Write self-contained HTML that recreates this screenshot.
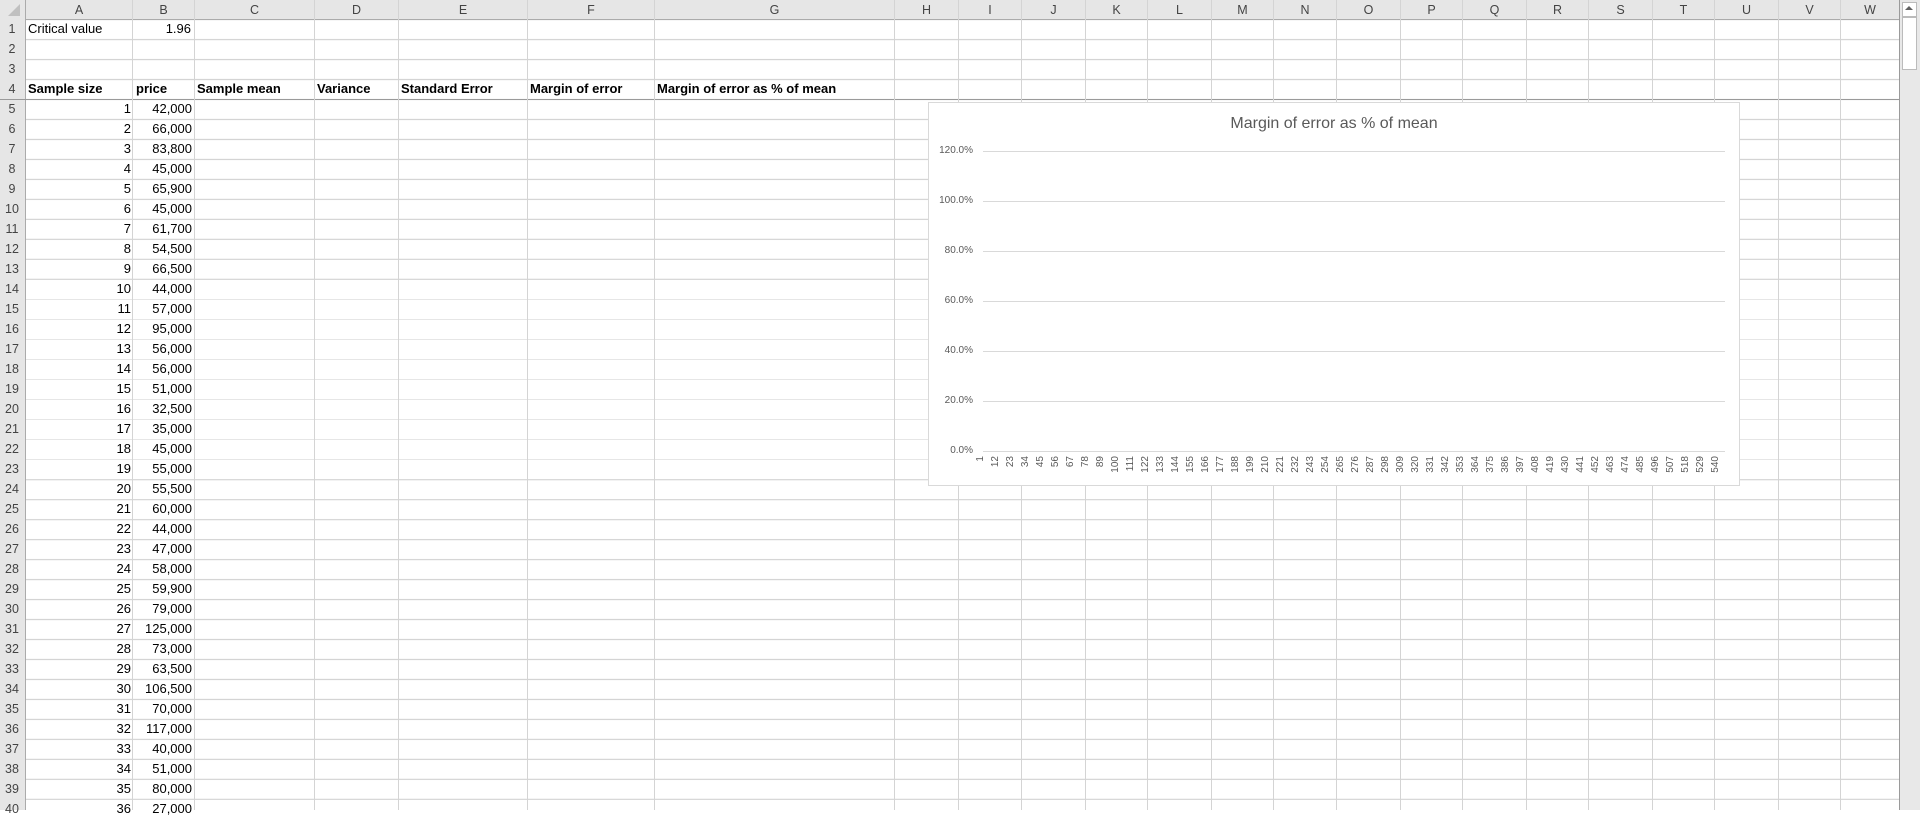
<!DOCTYPE html>
<html><head><meta charset="utf-8"><style>
body{margin:0;width:1920px;height:810px;overflow:hidden;background:#fff;font-family:"Liberation Sans",sans-serif;font-size:13px;color:#000;position:relative}
.a{position:absolute}
.vl{position:absolute;top:0;width:1px;height:810px;background:#d4d4d4}
.hd{position:absolute;top:0;height:20px;line-height:20px;text-align:center;color:#444;font-size:12.5px}
.rn{position:absolute;left:0;width:24px;text-align:center;color:#444;font-size:12.5px;height:20px;line-height:20px}
.t{position:absolute;height:20px;line-height:20px;white-space:nowrap}
.r{text-align:right}
.b{font-weight:bold}
.yl{position:absolute;right:0;font-size:10px;color:#595959;font-family:"Liberation Sans Narrow","Liberation Sans",sans-serif}
.xl{position:absolute;top:456px;font-size:10px;color:#595959;writing-mode:vertical-rl;transform:rotate(180deg);width:12px;text-align:left;line-height:12px}
</style></head><body>
<div class="a" style="left:0;top:0;width:1900px;height:810px;background:repeating-linear-gradient(to bottom,#d4d4d4 0,#d4d4d4 1px,transparent 1px,transparent 20px);background-position:0 19px"></div>
<div class="a" style="left:0;top:0;width:1900px;height:19px;background:#e6e6e6;border-bottom:1px solid #ababab"></div>
<div class="a" style="left:0;top:0;width:25px;height:810px;background:#e6e6e6;border-right:1px solid #ababab"></div>
<div class="a" style="left:0;top:99px;width:1899px;height:1px;background:#9a9a9a"></div>
<div class="vl" style="left:132px"></div><div class="vl" style="left:194px"></div><div class="vl" style="left:314px"></div><div class="vl" style="left:398px"></div><div class="vl" style="left:527px"></div><div class="vl" style="left:654px"></div><div class="vl" style="left:894px"></div><div class="vl" style="left:958px"></div><div class="vl" style="left:1021px"></div><div class="vl" style="left:1085px"></div><div class="vl" style="left:1147px"></div><div class="vl" style="left:1211px"></div><div class="vl" style="left:1273px"></div><div class="vl" style="left:1336px"></div><div class="vl" style="left:1400px"></div><div class="vl" style="left:1462px"></div><div class="vl" style="left:1526px"></div><div class="vl" style="left:1588px"></div><div class="vl" style="left:1652px"></div><div class="vl" style="left:1714px"></div><div class="vl" style="left:1778px"></div><div class="vl" style="left:1840px"></div>
<div class="a" style="left:1899px;top:0;width:1px;height:810px;background:#9a9a9a"></div>
<div class="a" style="left:1900px;top:0;width:20px;height:810px;background:#e8e8e8"></div>
<div class="a" style="left:1902px;top:2px;width:13px;height:13px;background:#fff;border:1px solid #bbb"></div>
<div class="a" style="left:1905px;top:6px;width:0;height:0;border-left:4px solid transparent;border-right:4px solid transparent;border-bottom:4px solid #606060"></div>
<div class="a" style="left:1902px;top:17px;width:13px;height:51px;background:#fff;border:1px solid #bbb"></div>
<div class="a" style="left:8px;top:4px;width:0;height:0;border-left:12px solid transparent;border-bottom:12px solid #c0c0c0"></div>
<div class="hd" style="left:26px;width:106px">A</div><div class="hd" style="left:133px;width:61px">B</div><div class="hd" style="left:195px;width:119px">C</div><div class="hd" style="left:315px;width:83px">D</div><div class="hd" style="left:399px;width:128px">E</div><div class="hd" style="left:528px;width:126px">F</div><div class="hd" style="left:655px;width:239px">G</div><div class="hd" style="left:895px;width:63px">H</div><div class="hd" style="left:959px;width:62px">I</div><div class="hd" style="left:1022px;width:63px">J</div><div class="hd" style="left:1086px;width:61px">K</div><div class="hd" style="left:1148px;width:63px">L</div><div class="hd" style="left:1212px;width:61px">M</div><div class="hd" style="left:1274px;width:62px">N</div><div class="hd" style="left:1337px;width:63px">O</div><div class="hd" style="left:1401px;width:61px">P</div><div class="hd" style="left:1463px;width:63px">Q</div><div class="hd" style="left:1527px;width:61px">R</div><div class="hd" style="left:1589px;width:63px">S</div><div class="hd" style="left:1653px;width:61px">T</div><div class="hd" style="left:1715px;width:63px">U</div><div class="hd" style="left:1779px;width:61px">V</div><div class="hd" style="left:1841px;width:58px">W</div>
<div class="rn" style="top:19px">1</div><div class="rn" style="top:39px">2</div><div class="rn" style="top:59px">3</div><div class="rn" style="top:79px">4</div><div class="rn" style="top:99px">5</div><div class="rn" style="top:119px">6</div><div class="rn" style="top:139px">7</div><div class="rn" style="top:159px">8</div><div class="rn" style="top:179px">9</div><div class="rn" style="top:199px">10</div><div class="rn" style="top:219px">11</div><div class="rn" style="top:239px">12</div><div class="rn" style="top:259px">13</div><div class="rn" style="top:279px">14</div><div class="rn" style="top:299px">15</div><div class="rn" style="top:319px">16</div><div class="rn" style="top:339px">17</div><div class="rn" style="top:359px">18</div><div class="rn" style="top:379px">19</div><div class="rn" style="top:399px">20</div><div class="rn" style="top:419px">21</div><div class="rn" style="top:439px">22</div><div class="rn" style="top:459px">23</div><div class="rn" style="top:479px">24</div><div class="rn" style="top:499px">25</div><div class="rn" style="top:519px">26</div><div class="rn" style="top:539px">27</div><div class="rn" style="top:559px">28</div><div class="rn" style="top:579px">29</div><div class="rn" style="top:599px">30</div><div class="rn" style="top:619px">31</div><div class="rn" style="top:639px">32</div><div class="rn" style="top:659px">33</div><div class="rn" style="top:679px">34</div><div class="rn" style="top:699px">35</div><div class="rn" style="top:719px">36</div><div class="rn" style="top:739px">37</div><div class="rn" style="top:759px">38</div><div class="rn" style="top:779px">39</div><div class="rn" style="top:799px">40</div>
<div class="t" style="left:28px;top:19px">Critical value</div><div class="t r" style="left:135px;width:56px;top:19px">1.96</div>
<div class="t b" style="left:28px;top:79px">Sample size</div><div class="t b" style="left:136px;top:79px">price</div><div class="t b" style="left:197px;top:79px">Sample mean</div><div class="t b" style="left:317px;top:79px">Variance</div><div class="t b" style="left:401px;top:79px">Standard Error</div><div class="t b" style="left:530px;top:79px">Margin of error</div><div class="t b" style="left:657px;top:79px">Margin of error as % of mean</div>
<div class="a" style="left:28px;top:99px;width:103px;text-align:right;line-height:20px">1<br>2<br>3<br>4<br>5<br>6<br>7<br>8<br>9<br>10<br>11<br>12<br>13<br>14<br>15<br>16<br>17<br>18<br>19<br>20<br>21<br>22<br>23<br>24<br>25<br>26<br>27<br>28<br>29<br>30<br>31<br>32<br>33<br>34<br>35<br>36</div>
<div class="a" style="left:134px;top:99px;width:58px;text-align:right;line-height:20px">42,000<br>66,000<br>83,800<br>45,000<br>65,900<br>45,000<br>61,700<br>54,500<br>66,500<br>44,000<br>57,000<br>95,000<br>56,000<br>56,000<br>51,000<br>32,500<br>35,000<br>45,000<br>55,000<br>55,500<br>60,000<br>44,000<br>47,000<br>58,000<br>59,900<br>79,000<br>125,000<br>73,000<br>63,500<br>106,500<br>70,000<br>117,000<br>40,000<br>51,000<br>80,000<br>27,000</div>
<div class="a" style="left:928px;top:102px;width:812px;height:384px;background:#fff;border:1px solid #d9d9d9;box-sizing:border-box">
<div class="a" style="left:0;right:0;top:12px;text-align:center;font-size:16px;color:#595959">Margin of error as % of mean</div>
<div class="a" style="left:54px;top:48px;width:742px;height:301px;background:repeating-linear-gradient(to bottom,#d9d9d9 0,#d9d9d9 1px,transparent 1px,transparent 50px)"></div>
<div class="a" style="left:0;top:0;width:44px">
<div class="yl" style="top:42px">120.0%</div><div class="yl" style="top:92px">100.0%</div><div class="yl" style="top:142px">80.0%</div><div class="yl" style="top:192px">60.0%</div><div class="yl" style="top:242px">40.0%</div><div class="yl" style="top:292px">20.0%</div><div class="yl" style="top:342px">0.0%</div>
</div>
</div>
<div class="a" style="left:975px;top:0">
<div class="xl" style="left:0">1</div><div class="xl" style="left:15px">12</div><div class="xl" style="left:30px">23</div><div class="xl" style="left:45px">34</div><div class="xl" style="left:60px">45</div><div class="xl" style="left:75px">56</div><div class="xl" style="left:90px">67</div><div class="xl" style="left:105px">78</div><div class="xl" style="left:120px">89</div><div class="xl" style="left:135px">100</div><div class="xl" style="left:150px">111</div><div class="xl" style="left:165px">122</div><div class="xl" style="left:180px">133</div><div class="xl" style="left:195px">144</div><div class="xl" style="left:210px">155</div><div class="xl" style="left:225px">166</div><div class="xl" style="left:240px">177</div><div class="xl" style="left:255px">188</div><div class="xl" style="left:270px">199</div><div class="xl" style="left:285px">210</div><div class="xl" style="left:300px">221</div><div class="xl" style="left:315px">232</div><div class="xl" style="left:330px">243</div><div class="xl" style="left:345px">254</div><div class="xl" style="left:360px">265</div><div class="xl" style="left:375px">276</div><div class="xl" style="left:390px">287</div><div class="xl" style="left:405px">298</div><div class="xl" style="left:420px">309</div><div class="xl" style="left:435px">320</div><div class="xl" style="left:450px">331</div><div class="xl" style="left:465px">342</div><div class="xl" style="left:480px">353</div><div class="xl" style="left:495px">364</div><div class="xl" style="left:510px">375</div><div class="xl" style="left:525px">386</div><div class="xl" style="left:540px">397</div><div class="xl" style="left:555px">408</div><div class="xl" style="left:570px">419</div><div class="xl" style="left:585px">430</div><div class="xl" style="left:600px">441</div><div class="xl" style="left:615px">452</div><div class="xl" style="left:630px">463</div><div class="xl" style="left:645px">474</div><div class="xl" style="left:660px">485</div><div class="xl" style="left:675px">496</div><div class="xl" style="left:690px">507</div><div class="xl" style="left:705px">518</div><div class="xl" style="left:720px">529</div><div class="xl" style="left:735px">540</div>
</div>
</body></html>
